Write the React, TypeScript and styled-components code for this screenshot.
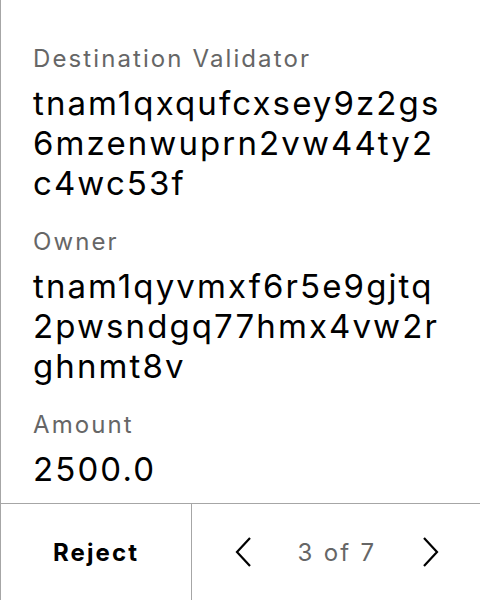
import React from "react";
import styled, { createGlobalStyle } from "styled-components";

const Global = createGlobalStyle`
  html, body { margin: 0; padding: 0; background: #ffffff; }
  body { font-family: Inter, "Noto Sans", sans-serif; }
`;

const Screen = styled.div`
  width: 480px;
  height: 600px;
  box-sizing: border-box;
  border-left: 1px solid #a6a6a6;
  display: flex;
  flex-direction: column;
  background: #ffffff;
`;

const Content = styled.div`
  flex: 1;
  min-height: 0;
  overflow: hidden;
  padding: 43px 32px 0 32px;
  display: flex;
  flex-direction: column;
  gap: 23px;
`;

const Field = styled.div`
  display: flex;
  flex-direction: column;
  gap: 8px;
`;

const Label = styled.div`
  font-size: 24px;
  line-height: 32px;
  font-weight: 400;
  letter-spacing: 2.1px;
  color: #666666;
`;

const Value = styled.div`
  font-size: 33px;
  line-height: 40px;
  font-weight: 400;
  letter-spacing: 2.1px;
  color: #000000;
  word-break: break-all;
`;

const Footer = styled.div`
  flex: none;
  height: 96px;
  border-top: 1px solid #a6a6a6;
  display: grid;
  grid-template-columns: 191px 1fr;
`;

const RejectButton = styled.div`
  display: flex;
  align-items: center;
  justify-content: center;
  border-right: 1px solid #a6a6a6;
  font-size: 24px;
  font-weight: 650;
  letter-spacing: 2.1px;
  color: #000000;
`;

const Nav = styled.div`
  display: flex;
  align-items: center;
  justify-content: space-between;
  padding: 0 40px 0 42px;
`;

const PageText = styled.div`
  font-size: 24px;
  font-weight: 400;
  letter-spacing: 2.3px;
  color: #666666;
`;

const Chevron: React.FC<{ dir: "left" | "right" }> = ({ dir }) => (
  <svg width="18" height="32" viewBox="0 0 18 32" fill="none">
    <path
      d={dir === "left" ? "M16 2 L3 16 L16 30" : "M2 2 L15 16 L2 30"}
      stroke="#000"
      strokeWidth="2.2"
    />
  </svg>
);

const fields = [
  { label: "Destination Validator", value: "tnam1qxqufcxsey9z2gs6mzenwuprn2vw44ty2c4wc53f" },
  { label: "Owner", value: "tnam1qyvmxf6r5e9gjtq2pwsndgq77hmx4vw2rghnmt8v" },
  { label: "Amount", value: "2500.0" },
];

export default function App() {
  return (
    <>
      <Global />
      <Screen>
        <Content>
          {fields.map((f) => (
            <Field key={f.label}>
              <Label>{f.label}</Label>
              <Value>{f.value}</Value>
            </Field>
          ))}
        </Content>
        <Footer>
          <RejectButton>Reject</RejectButton>
          <Nav>
            <Chevron dir="left" />
            <PageText>3 of 7</PageText>
            <Chevron dir="right" />
          </Nav>
        </Footer>
      </Screen>
    </>
  );
}
